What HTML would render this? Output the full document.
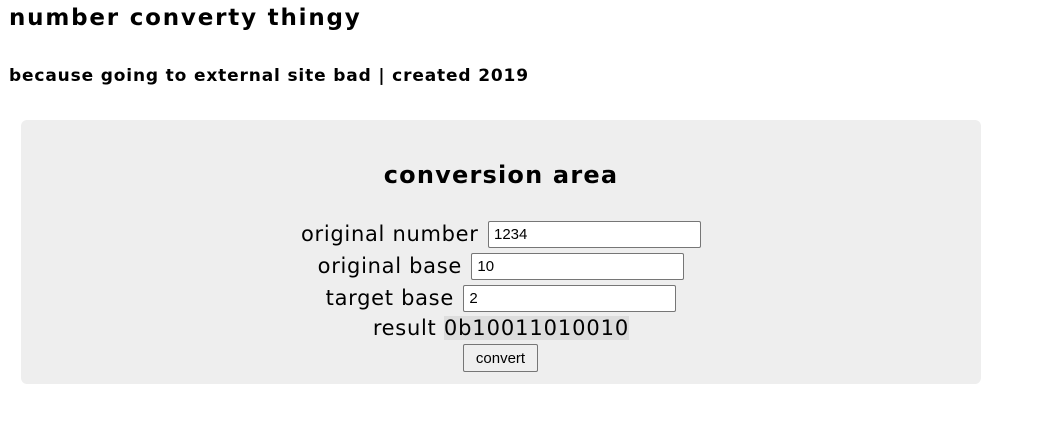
<!DOCTYPE html>
<html><head><meta charset="utf-8"><style>
body{margin:0;background:#fff;font-family:"DejaVu Sans",Verdana,sans-serif;color:#000;width:1050px;height:428px;overflow:hidden;position:relative}
h1{position:absolute;left:9px;top:5px;margin:0;font-size:23px;font-weight:bold;letter-spacing:1.8px}
h3{position:absolute;left:9px;top:66px;margin:0;font-size:17px;font-weight:bold;letter-spacing:0.85px}
.panel{position:absolute;left:21px;top:120px;width:960px;height:264px;background:#eeeeee;border-radius:6px}
h2{position:absolute;left:21px;width:960px;top:161px;margin:0;text-align:center;font-size:24px;font-weight:bold;letter-spacing:1.2px}
.row{position:absolute;left:21px;width:960px;text-align:center;font-size:21px;line-height:26px;white-space:nowrap;letter-spacing:0.7px}
.row input{font-family:"Liberation Sans",Arial,sans-serif;font-size:15px;letter-spacing:0;width:213px;height:27px;box-sizing:border-box;border:1px solid #767676;border-radius:2px;padding:1px 5px;vertical-align:top;background:#fff;margin-left:2px}
.res{background:#dddddd;letter-spacing:0.9px}
button{position:absolute;left:463px;top:344px;width:75px;height:28px;font-family:"Liberation Sans",Arial,sans-serif;font-size:15px;background:#efefef;border:1px solid #767676;border-radius:2px;padding:0}
</style></head><body>
<h1>number converty thingy</h1>
<h3>because going to external site bad | created 2019</h3>
<div class="panel"></div>
<h2>conversion area</h2>
<div class="row" style="top:221px">original number <input value="1234"></div>
<div class="row" style="top:253px">original base <input value="10"></div>
<div class="row" style="top:285px">target base <input value="2"></div>
<div class="row" style="top:315px">result <span class="res">0b10011010010</span></div>
<button>convert</button>
</body></html>
